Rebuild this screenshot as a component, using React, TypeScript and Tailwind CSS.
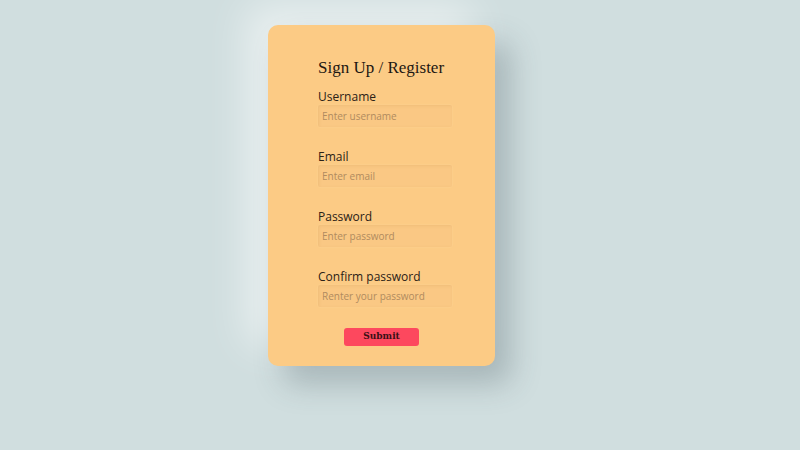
import React from 'react';

const fields = [
    { label: 'Username', placeholder: 'Enter username', type: 'text' },
    { label: 'Email', placeholder: 'Enter email', type: 'email' },
    { label: 'Password', placeholder: 'Enter password', type: 'password' },
    { label: 'Confirm password', placeholder: 'Renter your password', type: 'password' },
];

export default function App() {
    return (
        <div className="flex h-[450px] w-[800px] items-start justify-center bg-[#d0dedf] pt-[25px] pr-[37px]">
            <form
                className="flex w-[227px] flex-col rounded-[10px] bg-[#fccb85] pt-[33px] pr-[30px] pb-[20px] pl-[50px] shadow-[16px_18px_30px_rgba(60,80,85,0.28),-22px_-20px_40px_rgba(255,255,255,0.55)]"
                onSubmit={(e) => e.preventDefault()}
            >
                <h1 className="mb-[11px] whitespace-nowrap text-[17px] leading-[20px] text-[#1c1712]" style={{ fontFamily: '"Liberation Serif", serif' }}>
                    Sign Up / Register
                </h1>
                <div className="flex flex-col gap-[22px] font-['Open_Sans',sans-serif]">
                    {fields.map((f) => (
                        <label key={f.label} className="flex flex-col">
                            <span className="text-[12px] leading-[16px] text-[#2b2116]">{f.label}</span>
                            <input
                                type={f.type}
                                placeholder={f.placeholder}
                                className="h-[22px] w-[134px] rounded-[2px] bg-[#fac884] px-[4px] text-[10px] text-[#5a4328] shadow-[inset_1px_1px_3px_rgba(170,120,50,0.12),0_0_2px_rgba(255,230,180,0.4)] outline-none placeholder:text-[#b08b5f]"
                            />
                        </label>
                    ))}
                </div>
                <div className="mt-[21px] flex w-[127px] justify-center">
                    <button
                        type="submit"
                        className="h-[18px] w-[75px] rounded-[3px] bg-[#fd485e] text-[9px] font-bold text-[#3a1015]"
                        style={{ fontFamily: '"DejaVu Serif", "Liberation Serif", serif' }}
                    >
                        Submit
                    </button>
                </div>
            </form>
        </div>
    );
}
